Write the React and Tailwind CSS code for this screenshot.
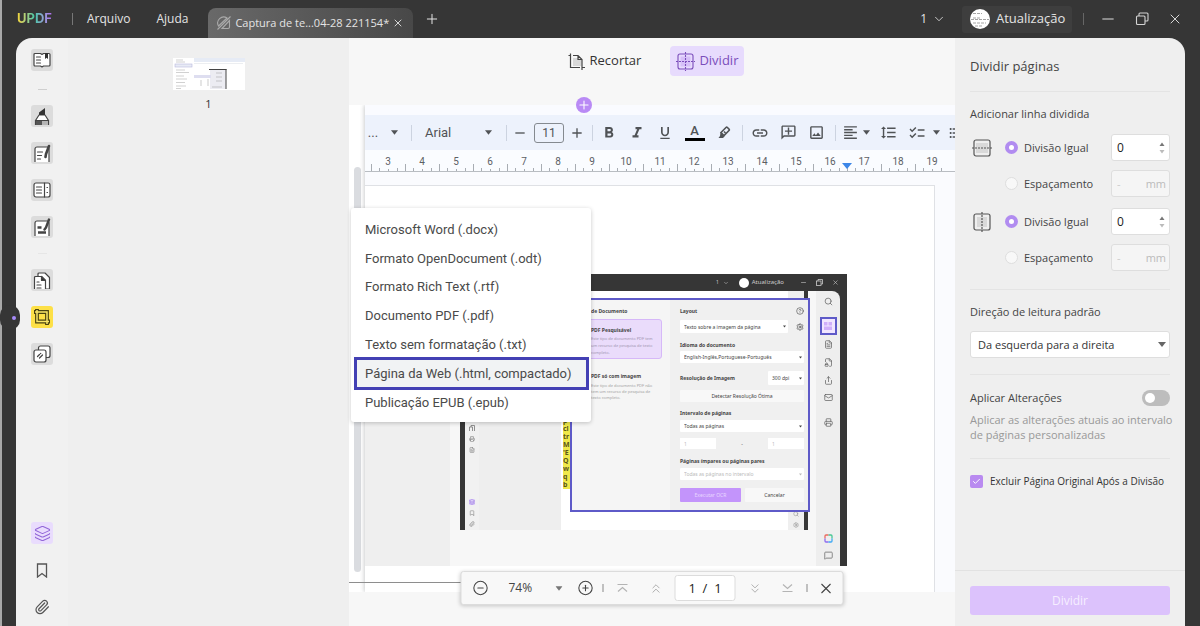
import React from "react";
import {
  MdFormatBold, MdFormatItalic, MdFormatUnderlined, MdLink, MdOutlineAddComment, MdOutlineImage,
  MdFormatAlignLeft, MdFormatLineSpacing, MdChecklist, MdFormatListBulleted, MdAdd, MdRemove,
} from "react-icons/md";
import {
  X, Plus, ChevronDown, Minus, Layers, Bookmark, Paperclip, CirclePlus, CircleMinus, Check,
  ChevronsUp, ChevronsDown, Search, CircleHelp, Mail, Share, FileText, FileLock, Settings, Printer, MessageSquare,
} from "lucide-react";

const Caret = ({ className = "" }) => (
  <svg viewBox="0 0 8 5" className={"h-[5px] w-2 " + className} fill="currentColor" aria-hidden="true"><path d="M0 0h8L4 5z" /></svg>
);

const ink = { fill: "none", stroke: "#444", strokeWidth: 1.2, strokeLinejoin: "round", strokeLinecap: "round" };

const ReaderIcon = () => (
  <svg viewBox="0 0 18 18" className="size-[18px]" {...ink}>
    <path d="M2 2.500h5.500L9 3.500l1.500-1H16a1 1 0 0 1 1 1V14a1 1 0 0 1-1 1h-5.500L9 16l-1.500-1H2a1 1 0 0 1-1-1V3.500a1 1 0 0 1 1-1z" fill="#fff" />
    <path d="M3.500 6h4M3.500 9h4M3.500 12h4" />
    <path d="M12 2h3v6l-1.500-1.200L12 8z" fill="#333" stroke="none" />
  </svg>
);
const MarkerIcon = () => (
  <svg viewBox="0 0 18 18" className="size-[18px]" {...ink}>
    <path d="M2.500 18v-4.500L6 8h6l3.500 5.500V18" fill="#fff" />
    <path d="M3 14h6v4H3z" fill="#555" stroke="none" />
    <path d="M9 14h6v4H9z" fill="#b5b5b5" stroke="none" />
    <path d="M6 8V5.500l6-4.500v7z" fill="#333" stroke="none" />
    <path d="M2.500 13.500h13" />
  </svg>
);
const EditIcon = () => (
  <svg viewBox="0 0 18 18" className="size-[18px]" {...ink}>
    <path d="M2 18V5a2 2 0 0 1 2-2h10a2 2 0 0 1 2 2v13" fill="#fff" />
    <path d="M4.500 8h5M4.500 11.500h4M4.500 15h3" />
    <path d="M16 2l-3 8-.5 3" strokeWidth="2.600" />
  </svg>
);
const ColumnsIcon = () => (
  <svg viewBox="0 0 18 18" className="size-[18px]" {...ink}>
    <rect x="1" y="2" width="16" height="14" rx="2" fill="#fff" />
    <path d="M11.500 2v14M3.500 6h5M3.500 9h5M3.500 12h5M14 6.500h.5M14 11.500h.5" />
  </svg>
);
const FormIcon = () => (
  <svg viewBox="0 0 18 18" className="size-[18px]" {...ink}>
    <path d="M2 18V5a2 2 0 0 1 2-2h10a2 2 0 0 1 2 2v13" fill="#fff" />
    <path d="M4.500 9.500h4M5 14.500h8" strokeWidth="2.600" strokeLinecap="butt" />
    <path d="M16 1.500l-3 8-1.500 2" strokeWidth="2.400" />
  </svg>
);
const PagesIcon = () => (
  <svg viewBox="0 0 18 18" className="size-[18px]" {...ink}>
    <path d="M5 5V3a1 1 0 0 1 1-1h6l4.500 4.500V18h-4" fill="#fff" />
    <path d="M1.500 18V6.500a1 1 0 0 1 1-1h6l4 4V18" fill="#fff" />
    <path d="M4 11h2M4 14h4M4 17h4" />
    <path d="M8.500 5.500v4h4z" fill="#333" />
  </svg>
);
const CropIcon = () => (
  <svg viewBox="0 0 18 18" className="size-[18px]" fill="none">
    <path d="M4 1v12.500h13M1 4h13v13" stroke="#4a4310" strokeWidth="3.800" />
    <path d="M4 2v11.500h12M2 4h12v12" stroke="#f8e66a" strokeWidth="1.500" />
  </svg>
);
const WatermarkIcon = () => (
  <svg viewBox="0 0 18 18" className="size-[18px]" {...ink}>
    <rect x="5.500" y="1" width="11.500" height="11.500" rx="2" fill="#fff" />
    <rect x="1" y="5" width="12" height="12" rx="2" fill="#fff" />
    <path d="M4.500 11.500l2-2M6.500 13l3-3M7.500 8.700l.3-.3" />
  </svg>
);

const SideButton = ({ label, active, children }) => (
  <button aria-label={label} className={"flex size-[22px] shrink-0 items-center justify-center rounded-[3px] " + (active ? "bg-[#fde047]" : "bg-[#dcdcdc]")}>
    {children}
  </button>
);

function TitleBar() {
  return (
    <header className="flex h-[38px] shrink-0 items-center text-[#e4e4e4]">
      <span className="ml-[15px] bg-linear-to-r from-[#f5d32c] via-[#3cc8a8] to-[#b56cf5] bg-clip-text font-[Inter,sans-serif] text-[13px] font-bold text-transparent">
        UPDF
      </span>
      <span className="ml-5 h-3 w-px bg-[#777]" />
      <nav className="ml-[14px] flex gap-[26px] text-[12px]">
        <button>Arquivo</button>
        <button>Ajuda</button>
      </nav>
      <div className="ml-5 flex h-[30px] w-[205px] items-center gap-[3px] self-end rounded-t-lg bg-linear-to-r from-[#696969] to-[#484848] pl-2">
        <svg viewBox="0 0 16 16" className="size-4 shrink-0" fill="none" stroke="#aaa" strokeWidth="1.1" aria-hidden="true">
          <path d="M2.500 11A6 6 0 0 1 11 3zM6 13.500l7.500-8V12a1.500 1.500 0 0 1-1.500 1.500zM1.500 14.500l13-13" />
        </svg>
        <span className="whitespace-nowrap text-[11px]">Captura de te...04-28 221154*</span>
        <button aria-label="Fechar aba" className="ml-auto mr-[11px]"><X className="size-3" strokeWidth={1.8} /></button>
      </div>
      <button aria-label="Nova aba" className="ml-[11px]"><Plus className="size-4" strokeWidth={1.5} /></button>
      <div className="ml-auto flex items-center">
        <button className="flex items-center gap-[5px] text-[12px]">1 <ChevronDown className="size-[14px]" strokeWidth={1.4} /></button>
        <button className="ml-4 flex h-[27px] w-[110px] items-center gap-[6px] rounded-[3px] bg-[#3e3e3e] pl-2 text-[13px]">
          <svg viewBox="0 0 20 20" className="size-5 shrink-0" aria-hidden="true">
            <circle cx="10" cy="10" r="10" fill="#fff" />
            <path d="M3 4.500h9M3 9h8M1 10.500h18M3 14h13M5 17h8" stroke="#a5a5a5" strokeWidth="1" strokeDasharray="3 1" />
          </svg>
          Atualização
        </button>
        <span className="ml-[11px] h-3 w-px bg-[#666]" />
        <button aria-label="Minimizar" className="ml-[15px]"><Minus className="size-[18px]" strokeWidth={1.3} /></button>
        <button aria-label="Restaurar" className="ml-[18px]">
          <svg viewBox="0 0 14 14" className="size-[14px]" fill="none" stroke="#d4d4d4" strokeWidth="1.100">
            <rect x="1.500" y="4" width="8.500" height="8.500" rx="1" /><path d="M4 4V2a1 1 0 0 1 1-1h7a1 1 0 0 1 1 1v6a1 1 0 0 1-1 1h-2" />
          </svg>
        </button>
        <button aria-label="Fechar" className="ml-[18px] mr-[17px]"><X className="size-4" strokeWidth={1.4} /></button>
      </div>
    </header>
  );
}

function SideBar() {
  return (
    <aside className="relative flex w-[52px] shrink-0 flex-col items-center gap-[15px] rounded-tl-2xl bg-[#f1f1f1] pt-[11px]">
      <span className="absolute -left-4 top-[267px] h-[25px] w-5 rounded-[10px] bg-[#363636]" />
      <span className="absolute -left-1 top-[278px] size-1 rounded-full bg-[#a78bfa]" />
      <SideButton label="Leitor"><ReaderIcon /></SideButton>
      <span className="h-1 w-[9px] border-b border-[#cfcfcf]" />
      <SideButton label="Comentar"><MarkerIcon /></SideButton>
      <SideButton label="Editar"><EditIcon /></SideButton>
      <SideButton label="Organizar"><ColumnsIcon /></SideButton>
      <SideButton label="Formulário"><FormIcon /></SideButton>
      <span className="h-px w-[9px] bg-[#e6e6e6]" />
      <SideButton label="Páginas"><PagesIcon /></SideButton>
      <SideButton label="Cortar" active><CropIcon /></SideButton>
      <SideButton label="Marca d'água"><WatermarkIcon /></SideButton>
      <div className="mt-auto flex flex-col items-center gap-[15px] pb-2 text-[#555]">
        <button aria-label="Camadas" className="flex size-[22px] items-center justify-center rounded-[3px] bg-[#e9dcfd] text-[#9266d8]"><Layers className="size-[17px]" strokeWidth={1.5} /></button>
        <button aria-label="Marcadores" className="flex size-[22px] items-center justify-center">
          <svg viewBox="0 0 12 15" className="h-[15px] w-3" fill="none" stroke="currentColor" strokeWidth="1.300"><path d="M1.500 1h9v13L6 10.500 1.500 14z" /></svg>
        </button>
        <button aria-label="Anexos" className="flex size-[22px] items-center justify-center"><Paperclip className="size-4" strokeWidth={1.8} /></button>
      </div>
    </aside>
  );
}

function Thumbnails() {
  return (
    <section className="flex w-[281px] shrink-0 flex-col items-center bg-[#efefef] pt-5">
      <button aria-label="Página 1" className="flex flex-col items-center">
        <svg viewBox="0 0 72 32" className="h-8 w-[72px] bg-white" aria-hidden="true">
          <rect x="21" width="51" height="4" fill="#e6ebf5" />
          <path d="M21 5.500h49" stroke="#d8dce2" strokeWidth=".5" />
          <rect x="2" y="6" width="17" height="3" fill="#e8ebf5" stroke="#b8b8de" strokeWidth=".6" />
          <path d="M3 2h7M3 4h9M3 12h9M3 14.500h13M3 18h8M3 21h11M3 24.500h9M3 28h10M3 30.500h5" stroke="#bdbdbd" strokeWidth=".7" />
          <rect x="37" y="11" width="16" height="20" fill="#ececf2" />
          <path d="M36 11.500h17.500M53 11v20" stroke="#444" strokeWidth="1" />
          <rect x="21" y="17" width="17" height="3" fill="#dedef0" />
          <path d="M28 22v6M35 21v7M43 15h6M43 19h6M43 23h6M39 29h10" stroke="#aaa" strokeWidth=".6" />
        </svg>
        <span className="mt-[6px] text-[11px] leading-4 text-[#333]">1</span>
      </button>
    </section>
  );
}

const Sep = ({ className }) => <span className={"flex h-4 shrink-0 justify-center " + className}><span className="w-px bg-[#ccd3e0]" /></span>;
const Tool = ({ label, className, children }) => (
  <button aria-label={label} className={"flex shrink-0 items-center justify-center " + className}>{children}</button>
);

function EditorToolbar() {
  return (
    <div className="flex h-[35px] shrink-0 items-center overflow-hidden bg-[#edf2fc] font-[Roboto,sans-serif] text-[#505356]">
      <Tool label="Estilo" className="w-4 text-[13px]">...</Tool>
      <Tool label="Abrir estilos" className="w-[26px]"><Caret className="h-1 w-[7px]" /></Tool>
      <Sep className="w-2" />
      <button className="flex w-[83px] shrink-0 items-center justify-between pl-[10px] pr-[6px] text-[13px]">Arial <Caret className="h-1 w-[7px]" /></button>
      <Sep className="w-4" />
      <Tool label="Diminuir fonte" className="w-3"><MdRemove className="size-4 shrink-0" /></Tool>
      <input aria-label="Tamanho da fonte" defaultValue="11" className="ml-2 h-5 w-[30px] shrink-0 rounded-[3px] border border-[#858a90] bg-transparent text-center text-[12px]" />
      <Tool label="Aumentar fonte" className="w-[26px]"><MdAdd className="size-4" /></Tool>
      <Sep className="w-[5px]" />
      <Tool label="Negrito" className="w-7"><MdFormatBold className="size-[18px]" /></Tool>
      <Tool label="Itálico" className="w-7"><MdFormatItalic className="size-[18px]" /></Tool>
      <Tool label="Sublinhado" className="w-7"><MdFormatUnderlined className="size-4" /></Tool>
      <button aria-label="Cor do texto" className="flex w-[31px] shrink-0 flex-col items-center text-[13px] font-medium leading-[14px]">A<span className="h-[3px] w-5 bg-black" /></button>
      <Tool label="Destaque" className="w-7">
        <svg viewBox="0 0 14 14" className="size-[14px]" fill="none" stroke="currentColor" strokeWidth="1.600"><path d="M4 6.500l5-5a1 1 0 0 1 1.400 0l1.600 1.600a1 1 0 0 1 0 1.400l-5 5z" /><path d="M3.500 6.500L7.500 10.500 6 12H1.500L3 10z" fill="currentColor" stroke="none" /><path d="M7 5.500l1.500 1.500" /></svg>
      </Tool>
      <Sep className="w-2" />
      <Tool label="Link" className="w-7"><MdLink className="size-[18px]" /></Tool>
      <Tool label="Comentário" className="w-7"><MdOutlineAddComment className="size-[17px] -scale-x-100" /></Tool>
      <Tool label="Imagem" className="w-7"><MdOutlineImage className="size-[17px]" /></Tool>
      <Sep className="w-[10px]" />
      <Tool label="Alinhar" className="w-5"><MdFormatAlignLeft className="size-[17px]" /></Tool>
      <Tool label="Opções de alinhamento" className="w-3"><Caret className="h-1 w-[7px]" /></Tool>
      <Tool label="Espaçamento entre linhas" className="w-8"><MdFormatLineSpacing className="size-[17px]" /></Tool>
      <Tool label="Lista de verificação" className="w-[26px]"><MdChecklist className="size-[18px]" /></Tool>
      <Tool label="Opções de lista" className="w-3"><Caret className="h-1 w-[7px]" /></Tool>
      <Tool label="Marcadores" className="ml-[5px] w-[18px]"><MdFormatListBulleted className="size-4" /></Tool>
    </div>
  );
}

const ruler = [3, 4, 5, 6, 7, 8, 9, 10, 11, 12, 13, 14, 15, 16, 17, 18, 19];

function Ruler() {
  return (
    <div className="relative flex h-[22px] shrink-0 overflow-hidden border-b border-[#b9bdc2] bg-[#fafcff] pl-[6px] font-[Roboto,sans-serif]">
      {ruler.map((n) => (
        <div key={n} className="flex w-[34px] shrink-0 flex-col items-center justify-end text-[10px] leading-3 text-[#5c6065]">
          {n}
          <svg viewBox="0 0 34 7" className="-mt-1 h-[7px] w-[34px]" stroke="#a8adb3" aria-hidden="true"><path d="M.5 0v7M8.500 4v3M17.500 5v2M26.500 4v3" /></svg>
        </div>
      ))}
      <svg viewBox="0 0 10 6" className="absolute bottom-[2px] left-[477px] h-[6px] w-[10px]" fill="#3b86e8" aria-hidden="true"><path d="M0 0h10L5 6z" /></svg>
    </div>
  );
}

const MiniSelect = ({ label, value, className }) => (
  <span className={"relative flex items-center rounded-[1px] bg-white " + className}>
    <select aria-label={label} className="h-full w-full appearance-none bg-transparent pl-1 text-[5px] leading-[8px]"><option>{value}</option></select>
    <Caret className="pointer-events-none absolute right-[2px] h-[2px] w-[3px]" />
  </span>
);

function OcrDialog() {
  return (
    <div role="dialog" aria-label="OCR" className="absolute right-[37px] top-[24px] flex h-[214px] w-[240px] border-2 border-[#5e5ac8] bg-[#f0f0f0] text-[5px] leading-[8px] text-[#444]">
      <div className="w-[98px] bg-[#f5f5f5] pl-[7px] pr-2 pt-[7px]">
        <h3 className="font-bold">Tipo de Documento</h3>
        <div className="mt-1 h-10 rounded-[3px] border border-[#d6b8f8] bg-[#eadcfb] pl-[11px] pt-[6px]">
          <h4 className="font-bold">PDF Pesquisável</h4>
          <p className="mt-px whitespace-nowrap text-[4px] leading-[7px] text-[#a094b0]">Este tipo de documento PDF tem<br />um recurso de pesquisa de texto<br />completo.</p>
        </div>
        <div className="pl-3 pt-[13px]">
          <h4 className="font-bold">PDF só com imagem</h4>
          <p className="mt-[3px] whitespace-nowrap text-[4px] leading-[6px] text-[#a0a0a0]">Este tipo de documento PDF não<br />tem um recurso de pesquisa de<br />texto completo.</p>
        </div>
      </div>
      <div className="flex flex-1 flex-col pl-[10px] pr-1 pt-[7px]">
        <div className="flex items-center justify-between"><h3 className="font-bold">Layout</h3><CircleHelp className="size-2" strokeWidth={1.8} /></div>
        <div className="mt-[5px] flex items-center justify-between"><MiniSelect label="Layout" value="Texto sobre a imagem da página" className="h-[13px] w-[108px]" /><Settings className="size-2" strokeWidth={2} /></div>
        <h3 className="mt-2 font-bold">Idioma do documento</h3>
        <MiniSelect label="Idioma" value="English-Inglês,Portuguese-Português" className="mt-[2px] h-3" />
        <div className="mt-2 flex items-center justify-between"><h3 className="font-bold">Resolução de Imagem</h3><MiniSelect label="Resolução" value="300 dpi" className="h-[14px] w-9" /></div>
        <button className="mt-[5px] h-3 rounded-[1px] bg-[#f8f8f8]">Detectar Resolução Ótima</button>
        <h3 className="mt-[7px] font-bold">Intervalo de páginas</h3>
        <MiniSelect label="Intervalo" value="Todas as páginas" className="mt-[3px] h-3" />
        <div className="mt-[6px] flex items-center justify-between">
          <input aria-label="Da página" defaultValue="1" className="h-[11px] w-9 bg-white pl-1 text-[#bbb]" /><span>-</span>
          <input aria-label="Até a página" defaultValue="1" className="h-[11px] w-9 bg-white pl-1 text-[#bbb]" />
        </div>
        <h3 className="mt-2 font-bold">Páginas ímpares ou páginas pares</h3>
        <MiniSelect label="Paridade" value="Todas as páginas no intervalo" className="mt-[3px] h-3 text-[#bbb]" />
        <div className="mt-2 flex gap-1">
          <button className="h-[14px] w-[61px] rounded-[1px] bg-[#c394fb] text-[#e8d8ff]">Executar OCR</button>
          <button className="h-[14px] flex-1 rounded-[1px] bg-[#f8f8f8]">Cancelar</button>
        </div>
      </div>
    </div>
  );
}

const highlighted = ["p", "cl", "tr", "M", "'E", "Q", "w", "q", "b"];

function EmbeddedWindow() {
  return (
    <div className="relative mt-[88px] flex h-[292px] w-[482px] shrink-0 flex-col bg-[#363636] pr-[7px] font-['Noto_Sans',sans-serif]">
      <div className="flex h-[17px] shrink-0 items-center justify-end pr-px text-[5px] text-[#ccc]">
        1 <ChevronDown className="ml-1 size-[6px]" />
        <span className="ml-[10px] size-[10px] rounded-full bg-white" /><span className="ml-[3px] text-[6px]">Atualização</span>
        <Minus className="ml-4 size-[7px]" />
        <svg viewBox="0 0 7 7" className="ml-[9px] size-[7px]" fill="none" stroke="#ccc" strokeWidth=".8"><rect x=".5" y="2" width="4.500" height="4.500" /><path d="M2 2V.5h4.500V5H5" /></svg>
        <X className="ml-[9px] size-[7px]" />
      </div>
      <div className="flex min-h-0 flex-1">
        <div className="w-[85px] bg-[#efefef]" />
        <div className="flex flex-1 bg-[#f7f7f7] pb-9 pl-[10px] pr-2">
          <div className="w-[5px] bg-[#363636]" />
          <div className="flex w-[14px] flex-col items-center bg-[#f1f1f1] pb-[3px] text-[#777]">
            <div className="mt-auto flex flex-col items-center gap-[5px] pb-[46px]">
              <PagesMini /><Printer className="size-[6px]" /><FileText className="size-[6px]" />
            </div>
            <div className="flex flex-col items-center gap-[5px]">
              <Layers className="size-[6px] bg-[#e2d6fb] text-[#8a62d8]" /><Bookmark className="size-[6px]" /><Paperclip className="size-[6px]" />
            </div>
          </div>
          <div className="w-[82px] bg-[#eeeeee]" />
          <div className="flex flex-1 flex-col justify-end bg-white pb-[41px] pl-[2px]">
            {highlighted.map((t) => <span key={t} className="h-2 w-[7px] overflow-hidden bg-[#f0e84a] text-[7px] font-bold leading-[8px] text-[#5b571a]">{t}</span>)}
          </div>
          <div className="flex w-4 flex-col items-center justify-end gap-[5px] bg-[#efefef] pb-[2px] text-[#888]"><Search className="size-[6px]" /><Settings className="size-[6px]" /></div>
          <div className="w-1 bg-[#363636]" />
        </div>
        <div className="flex w-6 flex-col items-center rounded-tr-lg bg-[#eeeeee] pb-[6px] pt-[6px] text-[#666]">
          <Search className="size-[9px]" />
          <span className="mt-[11px] flex h-[18px] w-[17px] items-center justify-center border-2 border-[#5e5ac8] bg-[#f1e6ff]">
            <svg viewBox="0 0 8 8" className="size-2" fill="#d0aefa"><path d="M0 0h3.500v3.500H0zM4.500 0H8v3.500H4.500zM0 4.500h8V8H0z" /></svg>
          </span>
          <FileText className="mt-[5px] size-[9px]" />
          <FileLock className="mt-[9px] size-[9px]" />
          <Share className="mt-[9px] size-[9px]" />
          <Mail className="mt-2 size-[9px]" />
          <Printer className="mt-4 size-[9px]" />
          <svg viewBox="0 0 9 9" className="mt-auto size-[9px]" fill="none" strokeWidth="1.300"><path d="M4.500 1H2a1 1 0 0 0-1 1v2.500" stroke="#ec6a5e" /><path d="M4.500 1H7a1 1 0 0 1 1 1v2.500" stroke="#47c794" /><path d="M1 4.500V7a1 1 0 0 0 1 1h2.500" stroke="#8d6bf0" /><path d="M4.500 8H7a1 1 0 0 0 1-1V4.500" stroke="#3fa9f5" /></svg>
          <MessageSquare className="mt-2 size-[9px]" />
        </div>
      </div>
      <OcrDialog />
    </div>
  );
}

const PagesMini = () => (
  <svg viewBox="0 0 6 6" className="size-[6px]" fill="none" stroke="#777" strokeWidth=".8"><path d="M.5 6V2h3v4M2 2V.5h3.500V6" /></svg>
);

const formats = [
  "Microsoft Word (.docx)", "Formato OpenDocument (.odt)", "Formato Rich Text (.rtf)", "Documento PDF (.pdf)",
  "Texto sem formatação (.txt)", "Página da Web (.html, compactado)", "Publicação EPUB (.epub)",
];

function FormatMenu() {
  return (
    <div className="absolute left-[2px] top-[103px] grid h-[214px] w-60 grid-rows-7 rounded-[3px] bg-white pb-[5px] pl-[3px] pr-[2px] pt-[7px] font-[Roboto,sans-serif] text-[13px] text-[#4a4a4a] shadow-[0_1px_4px_rgba(0,0,0,0.22)]">
      {formats.map((f, i) => (
        <button key={f} className={"flex items-center whitespace-nowrap text-left " + (i === 5 ? "-my-[2px] border-[3px] border-[#4340b4] bg-[#f1f3f4] pl-2" : "pl-[11px]")}>{f}</button>
      ))}
    </div>
  );
}

function ZoomBar() {
  return (
    <div className="absolute bottom-[21px] left-1/2 flex h-[34px] w-[383px] -translate-x-1/2 items-center rounded-[3px] border border-[#dcdcdc] bg-[#f8f8f8] pl-[11px] pr-2 text-[#444] shadow-[0_1px_4px_rgba(0,0,0,0.2)]">
      <button aria-label="Diminuir zoom"><CircleMinus className="size-4" strokeWidth={1.6} /></button>
      <button className="ml-5 flex w-[54px] items-center justify-between text-[12px]">74% <Caret className="w-[7px] text-[#777]" /></button>
      <button aria-label="Aumentar zoom" className="ml-[15px]"><CirclePlus className="size-4" strokeWidth={1.6} /></button>
      <span className="ml-[9px] h-2 w-px bg-[#888]" />
      <button aria-label="Primeira página" className="ml-[13px] text-[#b4b4b4]">
        <svg viewBox="0 0 12 12" className="size-3" fill="none" stroke="currentColor" strokeWidth="1.200"><path d="M1 2.500h10M1.500 9.500L6 5.500l4.500 4" /></svg>
      </button>
      <button aria-label="Página anterior" className="ml-[20px] text-[#aaa]"><ChevronsUp className="size-[15px]" strokeWidth={1.5} /></button>
      <input aria-label="Página atual" defaultValue="1  /  1" className="ml-[11px] h-[26px] w-[61px] rounded-[3px] border border-[#dcdcdc] bg-white text-center text-[13px] text-[#222]" />
      <button aria-label="Próxima página" className="ml-3 text-[#aaa]"><ChevronsDown className="size-[15px]" strokeWidth={1.5} /></button>
      <button aria-label="Última página" className="ml-[19px] text-[#b4b4b4]">
        <svg viewBox="0 0 12 12" className="size-3" fill="none" stroke="currentColor" strokeWidth="1.200"><path d="M1 9.500h10M1.500 2.500L6 6.500l4.500-4" /></svg>
      </button>
      <span className="ml-[13px] h-2 w-px bg-[#888]" />
      <button aria-label="Fechar" className="ml-auto"><X className="size-[17px]" strokeWidth={1.5} /></button>
    </div>
  );
}

function Workspace() {
  return (
    <main className="relative flex min-w-0 flex-1 flex-col bg-[#f7f7f7] pb-[34px]">
      <div className="mt-2 flex justify-center gap-[21px] text-[13px]">
        <button className="flex h-[30px] items-center gap-[5px] px-2 text-[#333]">
          <svg viewBox="0 0 17 17" className="size-[17px]" fill="none" stroke="#444" strokeWidth="1.200" aria-hidden="true">
            <path d="M5 5h6l2.500 2.500V13H5z" fill="#d8d8d8" stroke="none" /><path d="M.5 2.500H2.500M5 2.500h5l4 4V17M2.500 .5V14.500H12M14 14.500h3M10 2.500v4h4" />
          </svg>
          Recortar
        </button>
        <button className="flex h-[30px] items-center gap-1 rounded-[4px] bg-[#e7dbfd] px-[6px] text-[#7b4dbb]">
          <svg viewBox="0 0 19 19" className="size-[19px]" fill="none" stroke="#7b4dbb" strokeWidth="1.100" aria-hidden="true">
            <path d="M4.500 4.500h10v10h-10z" fill="#d6bff8" stroke="none" /><rect x="2" y="2" width="15" height="15" rx="2" /><path d="M9.500 0v19M0 9.500h19" strokeDasharray="2 1" />
          </svg>
          Dividir
        </button>
      </div>
      <div className="relative mt-[29px] flex flex-1 bg-white">
        <div className="flex w-4 shrink-0 justify-center pb-5 pt-[62px]">
          <div className="w-[7px] rounded-sm bg-[#dadce0]" />
        </div>
        <div className="flex min-w-0 flex-1 flex-col shadow-[-1px_0_4px_rgba(60,64,67,0.25)] [clip-path:inset(0_0_0_-5px)]">
          <div className="h-[10px] shrink-0 bg-[#fafbff]" />
          <EditorToolbar />
          <Ruler />
          <div className="flex min-h-0 flex-1 flex-col bg-[#fafbfe] pr-5 pt-[13px]">
            <div className="min-h-0 flex-1 border-r border-t border-[#dfe1e5] bg-white">
              <div className="flex"><EmbeddedWindow /></div>
            </div>
          </div>
        </div>
        <span className="absolute bottom-[9px] left-0 h-px w-28 bg-[#8e8e8e]" />
        <button aria-label="Adicionar linha" className="absolute -top-2 left-[227px] flex size-4 items-center justify-center rounded-full bg-[#b98af5] text-white"><Plus className="size-[14px]" strokeWidth={1.8} /></button>
        <FormatMenu />
      </div>
      <ZoomBar />
    </main>
  );
}

const Spin = () => (
  <svg viewBox="0 0 6 12" className="h-3 w-[6px]" aria-hidden="true"><path d="M.5 4L3 .5 5.500 4z" fill="#777" /><path d="M.5 8L3 11.500 5.500 8z" fill="#bbb" /></svg>
);

function SplitGroup({ name, vertical }) {
  return (
    <fieldset className="grid grid-cols-[35px_1fr_59px] items-center gap-y-[9px] text-[#444]">
      <svg viewBox="0 0 20 20" className="ml-[2px] size-5" fill="none" stroke="#555" strokeWidth="1.200" aria-hidden="true">
        <path d={vertical ? "M5 5h10v10H5z" : "M4 5h12v10H4z"} fill="#d9d9d9" stroke="none" />
        <rect x="2" y="2" width="16" height="16" rx="2" />
        <path d={vertical ? "M10 0v20" : "M0 10h20"} strokeDasharray="2 1" />
      </svg>
      <label className="flex items-center gap-[6px]">
        <input type="radio" name={name} defaultChecked className="size-[13px] appearance-none rounded-full border-4 border-[#b18cf0] bg-white" />Divisão Igual
      </label>
      <span className="flex h-[27px] items-center rounded-[3px] border border-[#dedede] bg-white pl-[5px] pr-1">
        <input aria-label="Quantidade" defaultValue="0" className="w-0 flex-1 bg-transparent text-[12px] text-[#222]" /><Spin />
      </span>
      <span />
      <label className="flex items-center gap-[6px]">
        <input type="radio" name={name} className="size-[13px] appearance-none rounded-full border border-[#dedede] bg-[#f8f8f8]" />Espaçamento
      </label>
      <span className="flex h-[27px] items-center rounded-[3px] border border-[#dedede] bg-[#f5f5f5] pl-[5px] pr-[3px] text-[#bbb]">
        <input aria-label="Espaçamento em milímetros" placeholder="-" disabled className="w-0 flex-1 bg-transparent placeholder:text-[#ccc]" />mm
      </span>
    </fieldset>
  );
}

function SplitPanel() {
  return (
    <aside className="flex w-[230px] shrink-0 flex-col rounded-tr-2xl bg-[#efefef] text-[11px] leading-5 text-[#444]">
      <div className="px-[15px]">
        <h2 className="flex h-[53px] items-center pt-[3px] text-[13px]">Dividir páginas</h2>
        <section className="border-t border-[#e4e4e4] pb-[18px] pt-3">
          <h3>Adicionar linha dividida</h3>
          <div className="mt-[10px] flex flex-col gap-[11px]">
            <SplitGroup name="horizontal" />
            <SplitGroup name="vertical" vertical />
          </div>
        </section>
        <section className="border-t border-[#e4e4e4] pb-4 pt-3">
          <label htmlFor="direction">Direção de leitura padrão</label>
          <div className="relative mt-[9px] flex items-center">
            <select id="direction" className="h-[27px] w-full appearance-none rounded-[3px] border border-[#dedede] bg-white pl-[7px] text-[#333]"><option>Da esquerda para a direita</option></select>
            <Caret className="pointer-events-none absolute right-1 text-[#666]" />
          </div>
        </section>
        <section className="border-t border-[#e4e4e4] pb-[15px] pt-[13px]">
          <div className="flex items-center justify-between">
            <label htmlFor="apply">Aplicar Alterações</label>
            <button id="apply" role="switch" aria-checked="false" className="flex h-4 w-7 items-center rounded-full bg-[#bdbdbd] pl-[3px]"><span className="size-[10px] rounded-full bg-white" /></button>
          </div>
          <p className="-mr-2 mt-1 leading-[15px] text-[#999]">Aplicar as alterações atuais ao intervalo de páginas personalizadas</p>
        </section>
        <section className="mt-px border-t border-[#e4e4e4] pt-3">
          <label className="flex items-center gap-[7px] whitespace-nowrap text-[10px] text-[#333]">
            <span className="relative flex size-[13px] items-center justify-center">
              <input type="checkbox" defaultChecked className="size-[13px] appearance-none rounded-[2px] bg-[#b98af0]" />
              <Check className="pointer-events-none absolute size-[9px] text-white" strokeWidth={2.500} />
            </span>
            Excluir Página Original Após a Divisão
          </label>
        </section>
      </div>
      <div className="mt-auto border-t border-[#e2e2e2] px-[15px] pb-[11px] pt-[15px]">
        <button className="h-[29px] w-full rounded-[3px] bg-[#dcc2fc] text-[12px] text-[#f6eeff]">Dividir</button>
      </div>
    </aside>
  );
}

export default function App() {
  return (
    <div className="flex min-h-screen flex-col border-l-2 border-[#a9a9a9] bg-[#363636] font-['Open_Sans','Noto_Sans',sans-serif]">
      <TitleBar />
      <div className="ml-[14px] mr-[15px] flex flex-1">
        <SideBar />
        <Thumbnails />
        <Workspace />
        <SplitPanel />
      </div>
    </div>
  );
}
